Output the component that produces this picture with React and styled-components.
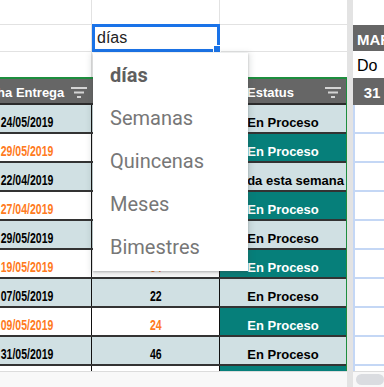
import React from 'react'
import styled, { createGlobalStyle } from 'styled-components'

const LIGHT = '#d0e0e3'
const TEAL = '#067f7a'
const ORANGE = '#ff7a21'
const GRID = '#e2e2e2'
const HEAD = '#666666'
const GREEN = '#1e8e3e'
const BLUE = '#1a73e8'
const SANS = '"Liberation Sans", Arial, sans-serif'

const rows = [
  { date: '24/05/2019', days: '39', status: 'En Proceso' },
  { date: '29/05/2019', days: '44', status: 'En Proceso' },
  { date: '22/04/2019', days: '7', status: 'Entregada esta semana' },
  { date: '27/04/2019', days: '12', status: 'En Proceso' },
  { date: '29/05/2019', days: '44', status: 'En Proceso' },
  { date: '19/05/2019', days: '34', status: 'En Proceso' },
  { date: '07/05/2019', days: '22', status: 'En Proceso' },
  { date: '09/05/2019', days: '24', status: 'En Proceso' },
  { date: '31/05/2019', days: '46', status: 'En Proceso' },
  { date: '02/06/2019', days: '48', status: 'En Proceso' },
]

const options = ['días', 'Semanas', 'Quincenas', 'Meses', 'Bimestres']

const GlobalStyle = createGlobalStyle`
  body {
    margin: 0;
    background: #fff;
    font-family: ${SANS};
    overflow: hidden;
  }
`

function FilterIcon() {
  return (
    <svg width="16" height="11" viewBox="0 0 16 11">
      <rect x="0" y="0" width="16" height="2" fill="#d4d4d4" />
      <rect x="3" y="4.5" width="10" height="2" fill="#d4d4d4" />
      <rect x="6" y="9" width="4" height="2" fill="#d4d4d4" />
    </svg>
  )
}

export default function App() {
  return (
    <>
      <GlobalStyle />
      <Page>
        <LeftPane>
          <Shift>
            <PlainRow h={25}>
              <PlainCell />
              <PlainCell />
              <PlainCell $edge />
            </PlainRow>
            <PlainRow h={27}>
              <PlainCell />
              <Editor>días</Editor>
              <PlainCell $edge />
            </PlainRow>
            <PlainRow h={25} $last>
              <PlainCell />
              <PlainCell />
              <PlainCell $edge />
            </PlainRow>

            <TableWrap>
              <HeaderRow>
                <HeadCell $pad={8}>
                  <HeadLabel>Fecha Entrega</HeadLabel>
                  <FilterBtn><FilterIcon /></FilterBtn>
                </HeadCell>
                <HeadCell>
                  <HeadLabel>Días</HeadLabel>
                  <FilterBtn><FilterIcon /></FilterBtn>
                </HeadCell>
                <HeadCell>
                  <HeadLabel>Estatus</HeadLabel>
                  <FilterBtn><FilterIcon /></FilterBtn>
                </HeadCell>
              </HeaderRow>

              {rows.map((r, i) => {
                const alt = i % 2 === 1
                const bg = alt ? '#fff' : LIGHT
                const fg = alt ? ORANGE : '#000'
                const clip = r.status.length > 12
                return (
                  <DataRow key={i}>
                    <DataCell $bg={bg} $fg={fg}><Narrow>{r.date}</Narrow></DataCell>
                    <DataCell $bg={bg} $fg={fg}><Narrow>{r.days}</Narrow></DataCell>
                    <DataCell
                      $edge
                      $bg={alt ? TEAL : LIGHT}
                      $fg={alt ? '#fff' : '#000'}
                      $align={clip ? 'flex-end' : 'center'}
                    >
                      {r.status}
                    </DataCell>
                  </DataRow>
                )
              })}
            </TableWrap>
          </Shift>
          <ScrollBar />
        </LeftPane>

        <Divider />

        <RightPane>
          <SideCell h={25} />
          <SideCell h={26} $dark>MAR</SideCell>
          <SideCell h={27} $plain>Do</SideCell>
          <SideCell h={27} $dark $center>31</SideCell>
          <SideBody>
            {rows.map((_, i) => <BlueCell key={i} />)}
          </SideBody>
          <ScrollBar>
            <Thumb />
          </ScrollBar>
        </RightPane>

        <Menu>
          {options.map((o, i) => (
            <MenuItem key={o} $active={i === 0}>{o}</MenuItem>
          ))}
        </Menu>
      </Page>
    </>
  )
}

const Page = styled.div`
  position: relative;
  display: flex;
  width: 384px;
  height: 387px;
  overflow: hidden;
`

const LeftPane = styled.div`
  width: 347px;
  flex: none;
  display: flex;
  flex-direction: column;
  overflow: hidden;
`

const Shift = styled.div`
  margin-left: -36px;
  width: 383px;
  flex: 1;
  min-height: 0;
  display: flex;
  flex-direction: column;
`

const Cols = styled.div`
  display: grid;
  grid-template-columns: 128px 128px 126px;
  flex: none;
  box-sizing: border-box;
`

const PlainRow = styled(Cols)`
  height: ${p => p.h}px;
  border-bottom: ${p => (p.$last ? 'none' : `1px solid ${GRID}`)};
`

const PlainCell = styled.div`
  border-right: ${p => (p.$edge ? 'none' : `1px solid ${GRID}`)};
`

const Editor = styled.div`
  position: relative;
  align-self: start;
  margin-top: -1px;
  height: 28px;
  box-sizing: border-box;
  border: 3px solid ${BLUE};
  padding-left: 2px;
  display: flex;
  align-items: center;
  font-family: ${SANS};
  font-size: 16px;
  color: #222;
  background: #fff;
  z-index: 1;

  &::after {
    content: '';
    position: absolute;
    right: -4px;
    bottom: -4px;
    width: 6px;
    height: 6px;
    background: ${BLUE};
    border: 1px solid #fff;
  }
`

const TableWrap = styled.div`
  flex: 1;
  min-height: 0;
  overflow: hidden;
  width: 383px;
  box-sizing: border-box;
  border-top: 2px solid ${GREEN};
  border-right: 1px solid ${GREEN};
`

const HeaderRow = styled(Cols)`
  height: 26px;
  background: ${HEAD};
  border-bottom: 2px solid #2b2b2b;
`

const HeadCell = styled.div`
  display: flex;
  align-items: center;
  padding-top: 3px;
  padding-left: ${p => p.$pad || 0}px;
  color: #fff;
  font-family: ${SANS};
  font-size: 13px;
  font-weight: bold;
  overflow: hidden;
`

const HeadLabel = styled.span`
  flex: 1;
  text-align: center;
  white-space: nowrap;
`

const FilterBtn = styled.span`
  display: flex;
  margin: 0 5px 0 4px;
`

const DataRow = styled(Cols)`
  height: 29px;
  border-bottom: 2px solid #333;
`

const DataCell = styled.div`
  background: ${p => p.$bg};
  color: ${p => p.$fg};
  border-right: ${p => (p.$edge ? 'none' : '1px solid #111')};
  display: flex;
  align-items: flex-end;
  justify-content: ${p => p.$align || 'center'};
  padding: 0 2px 3px;
  overflow: hidden;
  white-space: nowrap;
  font-family: ${SANS};
  font-size: 13px;
  font-weight: bold;
  line-height: 1;
`

const Narrow = styled.span`
  display: inline-block;
  font-size: 14px;
  transform: scaleX(0.75);
  transform-origin: center;
`

const ScrollBar = styled.div`
  height: 16px;
  flex: none;
  background: #f8f8f8;
  border-top: 1px solid #dcdcdc;
  box-sizing: border-box;
  display: flex;
  align-items: center;
`

const Thumb = styled.div`
  margin-left: 3px;
  width: 60px;
  height: 11px;
  border-radius: 6px;
  background: #dadce0;
`

const Divider = styled.div`
  width: 6px;
  flex: none;
  background: #e3e3e3;
`

const RightPane = styled.div`
  flex: 1;
  min-width: 0;
  display: flex;
  flex-direction: column;
  overflow: hidden;
`

const SideCell = styled.div`
  height: ${p => p.h}px;
  flex: none;
  display: flex;
  align-items: center;
  justify-content: ${p => (p.$center ? 'center' : 'flex-start')};
  width: ${p => (p.$center ? '38px' : 'auto')};
  padding-left: ${p => (p.$center ? '0' : '4px')};
  padding-top: 2px;
  box-sizing: border-box;
  white-space: nowrap;
  background: ${p => (p.$dark ? HEAD : '#fff')};
  color: ${p => (p.$dark ? '#fff' : '#000')};
  font-family: ${SANS};
  font-size: ${p => (p.$plain ? '16px' : '15px')};
  font-weight: ${p => (p.$dark ? 'bold' : 'normal')};
`

const SideBody = styled.div`
  flex: 1;
  min-height: 0;
  overflow: hidden;
  border-left: 2px solid #c4d7f5;
`

const BlueCell = styled.div`
  height: 29px;
  box-sizing: border-box;
  border-bottom: 2px solid #c4d7f5;
`

const Menu = styled.div`
  position: absolute;
  left: 93px;
  top: 53px;
  width: 155px;
  height: 218px;
  background: #fff;
  box-shadow: 0 2px 6px 2px rgba(60, 64, 67, 0.15), 0 1px 2px rgba(60, 64, 67, 0.3);
  display: flex;
  flex-direction: column;
  z-index: 2;
`

const MenuItem = styled.div`
  height: 43px;
  flex: none;
  display: flex;
  align-items: center;
  padding-left: 17px;
  font-family: Roboto, "Liberation Sans", sans-serif;
  font-size: 20px;
  font-weight: ${p => (p.$active ? 700 : 400)};
  color: ${p => (p.$active ? '#5f5f5f' : '#777')};
`
